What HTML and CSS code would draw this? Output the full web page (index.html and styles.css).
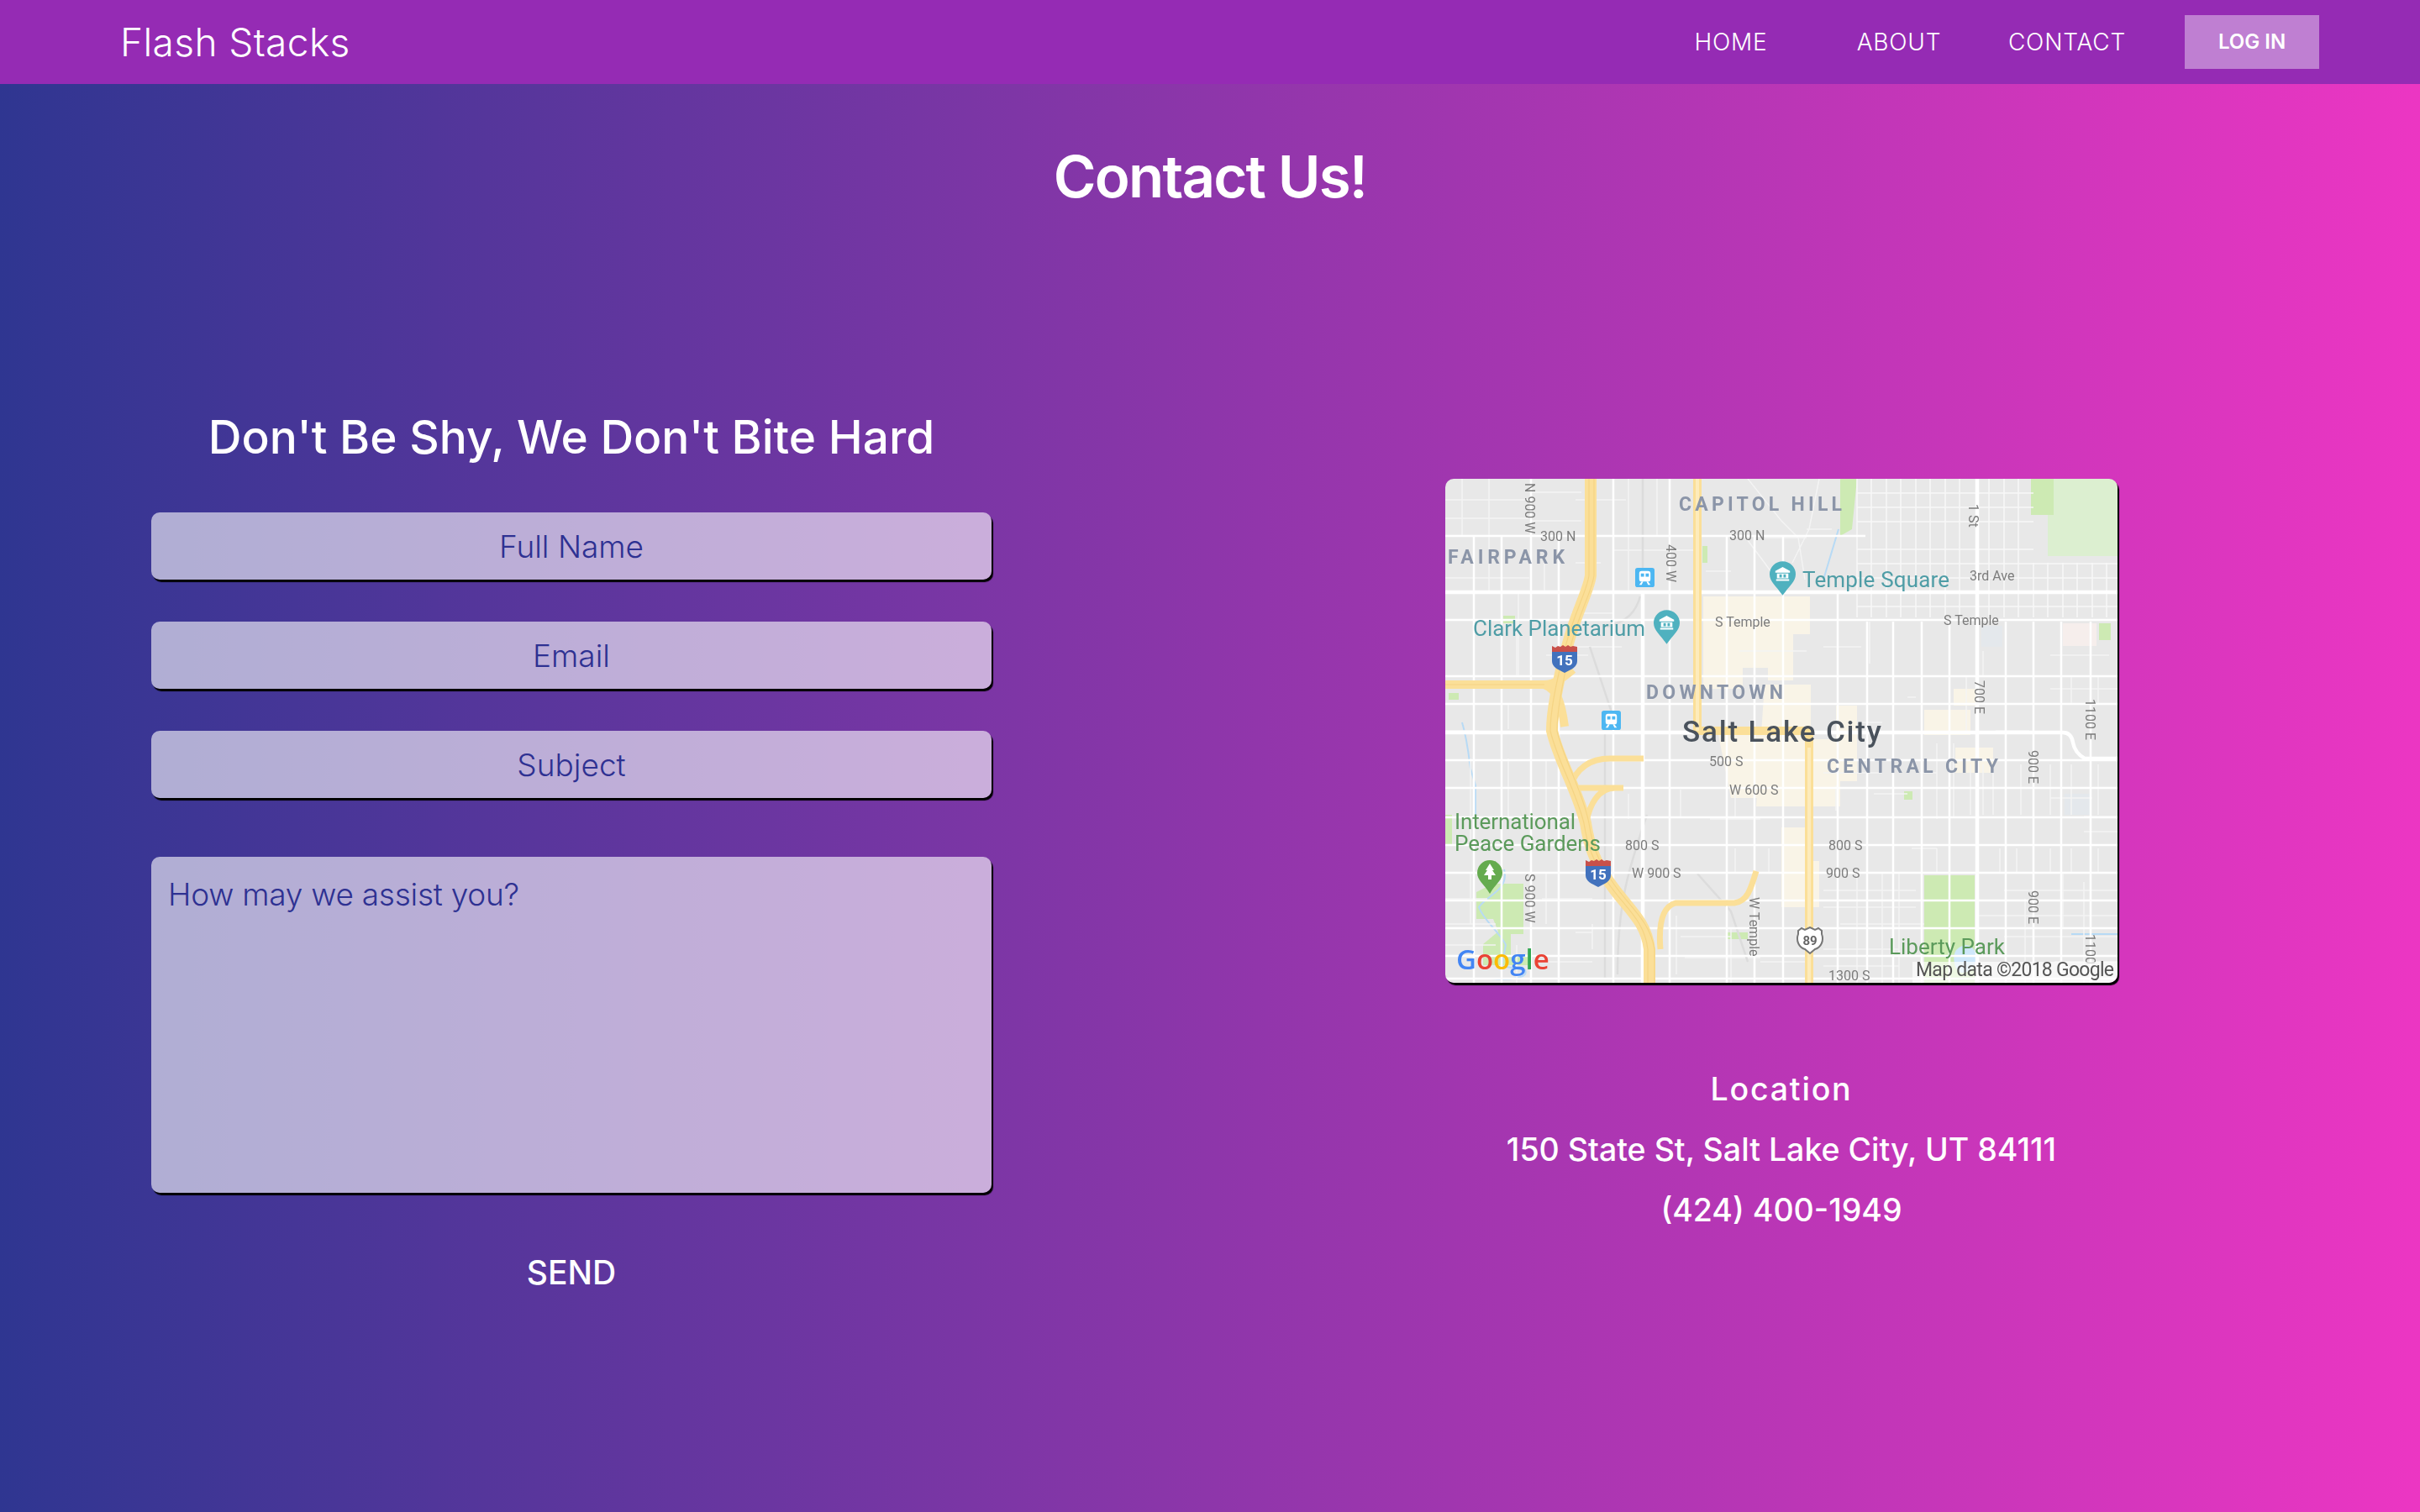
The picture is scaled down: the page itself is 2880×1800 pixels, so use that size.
FILE: index.html
```html
<!DOCTYPE html>
<html lang="en">
<head>
  <meta charset="UTF-8">
  <meta name="viewport" content="width=device-width, initial-scale=1.0">
  <title>Flash Stacks - Contact</title>
  <link rel="stylesheet" href="styles.css">
</head>
<body>
  <nav class="nav">
    <a class="brand" href="#">Flash Stacks</a>
    <div class="nav-links">
      <a class="nav-link" href="#">HOME</a>
      <a class="nav-link" href="#">ABOUT</a>
      <a class="nav-link" href="#">CONTACT</a>
      <a class="login" href="#">LOG IN</a>
    </div>
  </nav>

  <h1 class="title">Contact Us!</h1>

  <main class="columns">
    <form class="contact-form">
      <h2 class="form-title">Don't Be Shy, We Don't Bite Hard</h2>
      <input class="field" type="text" placeholder="Full Name">
      <input class="field" type="text" placeholder="Email">
      <input class="field" type="text" placeholder="Subject">
      <textarea class="field message" placeholder="How may we assist you?"></textarea>
      <button class="send" type="button">SEND</button>
    </form>

    <section class="location">
      <div class="map-frame">
        <svg class="map" viewBox="0 0 800 600" width="800" height="600">
          <defs>
            <symbol id="i15" viewBox="0 0 32 36">
              <path d="M1 2l4 2 3-2 3 1 3-2 3 2 3-2 3 2 3-1 5 1v6H1z" fill="#c8504a"/>
              <path d="M1 9h30v11c0 7-7 10-15 14C8 30 1 27 1 20z" fill="#4272bd"/>
              <text class="shield-text" x="16" y="25">15</text>
            </symbol>
            <symbol id="us89" viewBox="0 0 38 34">
              <path d="M5 5l4-3 4 2 6-3 6 3 4-2 4 3v4c3 8-1 16-8 18l-6 5-6-5C6 25 2 17 5 9z" fill="#fff" stroke="#777" stroke-width="2"/>
              <text class="us-text" x="19" y="22">89</text>
            </symbol>
            <symbol id="transit" viewBox="0 0 24 24">
              <rect width="24" height="24" rx="3" fill="#4db7f2"/>
              <rect x="5" y="4" width="14" height="13" rx="3" fill="#fff"/>
              <rect x="7" y="7" width="4" height="4" fill="#4db7f2"/>
              <rect x="13" y="7" width="4" height="4" fill="#4db7f2"/>
              <path d="M8 17l-3 4h3l2-4zM16 17l3 4h-3l-2-4z" fill="#fff"/>
            </symbol>
            <symbol id="museum" viewBox="0 0 32 42">
              <path d="M16 0a16 16 0 0 1 16 16c0 9-8 14-16 26C8 30 0 25 0 16A16 16 0 0 1 16 0z" fill="#4fb1bf"/>
              <path d="M16 7l9 5v2H7v-2zM8 22h16v2H8zM9 15h14v6H9z" fill="#fff"/>
              <path d="M12 16h3v4h-3zM17 16h3v4h-3z" fill="#4fb1bf"/>
            </symbol>
          </defs>

          <rect width="800" height="600" fill="#e8e8e8"/>

          <!-- land use -->
          <g fill="#f9f4e7">
            <path d="M307 140h127v45h-20v55h-30v-15h-30v25h-47z"/>
            <path d="M380 245h55v65h30v-40h25v90h-20v30h-100z"/>
            <path d="M325 305h110v55h-50v20h-45z"/>
            <path d="M400 415h35v40h10v55h-45z"/>
            <path d="M570 275h55v30h-55zM607 320h45v30h-45zM605 250h30v20h-30z"/>
          </g>
          <g fill="#cdeab3">
            <path d="M717 0h83v92h-83z" fill="#dcefd0"/>
            <path d="M697 0h27v43h-27zM570 472h60v128h-60z"/>
            <path d="M37 492l20-10h36v60H78v25h22v12H45v-25l18-15-6-15H37z"/>
            <path d="M69 163h14v9H69zM0 400h8v36H0zM4 255h12v8H4z"/>
            <path d="M470 0h20l-6 60-14 8zM306 80h6v20h-6zM778 172h14v20h-14zM546 372h10v10h-10zM335 540h25v8h-25z"/>
          </g>
          <path d="M735 172h40v27h-40z" fill="#f6eeec"/>
          <path d="M638 175h25v25h-25zM737 375h30v25h-30z" fill="#e4e8ec"/>

          <!-- water -->
          <g fill="none" stroke="#b7daf5" stroke-width="2">
            <path d="M20 290c6 20 8 40 10 55l6 20v50"/>
            <path d="M70 465c6 25-20 30-30 45 5 15 25 30 32 45l-5 25 28 5c5 10-20 12-40 10"/>
            <path d="M468 60l-12 40-6 20M636 535h85M745 542h55"/>
          </g>
          <path d="M609 560c8-8 20-6 22 6s-4 20-14 22-16-20-8-28z" fill="#cfe7fa"/>

          <!-- minor streets -->
          <g fill="none" stroke="#f4f4f4" stroke-width="1.5">
            <path d="M0 25h100M0 47h100M102 16h60M102 50h60M0 118h100M150 160h50M200 85h100M155 25h60M155 100h30"/>
            <path d="M20 0v68M52 0v135M87 135v100M118 100v35M218 0v135M252 0v68M85 168v68"/>
            <path d="M150 200h60M120 210h50M0 268h70M0 300h40M75 268v30M30 333v110M75 333v70M55 368h35M70 403h50M120 335v100"/>
            <path d="M0 500h50M0 530h60M0 555h60M30 470v60M85 555v45M115 500h60M155 540h20M175 530v30M120 470v60M120 575h55"/>
            <path d="M215 403h60M218 375v30M280 370v32M315 405h60M345 440v30M385 440v28M275 520v70M340 535v65M345 370v32"/>
            <path d="M450 350h70M465 365v30M510 375h40M555 440h30M565 350h20M585 315v90M585 440v30M605 315v87M625 340v60"/>
            <path d="M640 340v60M652 340v60M685 340v60M720 340v60M745 340v60M777 340v60M740 380h30"/>
            <path d="M660 440v30M680 440v30M720 440v30M745 440v30M777 440v30M760 402h40M760 420h40M720 380h20"/>
            <path d="M760 480v120M665 490h135M690 500v100M735 470v65M665 545h135M635 520h165M725 575h75"/>
            <path d="M450 490h110M450 510h110M470 530h100M490 470v130M520 470v130M540 470v130M450 560h90M450 580h90"/>
            <path d="M720 210h70M720 235h40M720 250h80M745 235v33M777 235v33M620 235v67M640 205v30M655 300h40"/>
            <path d="M350 205h80M340 110h-30M450 200h45M505 170v50M550 260h10M490 290h30"/>
            <path d="M350 60l30 40 25 35M360 0l40 50 20 20 8 50M380 70h50M445 0l-12 60-20 40M460 60h-30"/>
            <path d="M372 520v40M375 575h55M280 545h60M285 570h90"/>
          </g>
          <g fill="none" stroke="#dcdcdc" stroke-width="2.5">
            <path d="M235 0v110M232 140c-5 18-15 30-40 36M172 200l30 90M190 300v295M240 400c-20 60-35 100-35 190M300 470l40 45 20 60"/>
          </g>

          <!-- fine grid north east -->
          <g fill="none" stroke="#f8f8f8" stroke-width="1.5">
            <path d="M490 0v165M507 0v165M525 0v165M542 0v165M560 0v165M577 0v165M595 0v165M612 0v165M647 0v165M665 0v165M682 0v165"/>
            <path d="M700 100v65M717 100v65M735 100v65M752 100v65M770 100v65M787 100v65"/>
            <path d="M490 17h210M490 34h210M490 51h210M490 84h210M490 101h310M490 118h310M490 152h310"/>
          </g>

          <!-- main streets -->
          <g fill="none" stroke="#fff" stroke-width="2.5">
            <path d="M0 68h500M0 168h800M0 235h800M0 268h800M0 335h800M0 368h800M0 403h800M0 436h800M0 469h800M0 502h800M0 535h800M0 568h800M0 595h800"/>
            <path d="M34 68v532M67 68v532M102 0v600M135 68v532M200 0v600M267 0v600M335 68v532M368 68v532M402 68v532M467 135v465M502 170v430M533 170v430M567 170v430M600 170v430M667 170v430M700 170v430M733 170v430M768 170v430"/>
          </g>
          <g fill="none" stroke="#fff" stroke-width="4.5">
            <path d="M0 135h800M235 135v465M633 0v600M0 302h735q10 0 12 12t14 19h39"/>
          </g>

          <!-- highways -->
          <g fill="none" stroke="#fbdf98" stroke-linejoin="round">
            <path stroke-width="10" d="M300 0v300h133v300"/>
            <path stroke-width="7" d="M236 333h-40c-25 0-40 12-48 34M212 368h-55M202 368c-20 0-30 20-34 40"/>
            <path stroke-width="10" d="M0 245h118c12 0 22-8 34-18M118 245c15 6 20 20 24 50"/>
            <path stroke-width="7" d="M256 560c-2-25 0-50 18-55h70c16-2 20-18 26-38"/>
            <path stroke-width="14" d="M173 0v115c-2 18-18 45-28 85-8 30-18 70-18 100 8 35 30 70 40 110 4 25 10 45 28 70 20 30 44 45 48 80v40"/>
          </g>
          <g fill="none" stroke="#f5d484" stroke-width="1.2">
            <path d="M171 0v115c-2 18-18 45-28 85-8 30-18 70-18 100 8 35 30 70 40 110 4 25 10 45 28 70 20 30 44 45 48 80v40M177 0v115c-2 18-18 45-28 85-6 30-16 70-16 100 8 35 30 70 38 110 4 25 10 45 28 70 20 30 44 45 50 80v40"/>
            <path d="M0 245h118"/>
          </g>
          <path d="M300 0v300M433 320v280" fill="none" stroke="#fdebbb" stroke-width="4"/>

          <!-- shields and pins -->
          <use href="#i15" x="126" y="197" width="32" height="36"/>
          <use href="#i15" x="166" y="452" width="32" height="36"/>
          <use href="#us89" x="415" y="533" width="38" height="34"/>
          <use href="#transit" x="226" y="106" width="23" height="23"/>
          <use href="#transit" x="186" y="276" width="23" height="23"/>
          <use href="#museum" x="248" y="156" width="31" height="41"/>
          <use href="#museum" x="386" y="98" width="31" height="41"/>
          <path d="M53 454a15 15 0 0 1 15 15c0 9-8 13-15 25-7-12-15-16-15-25a15 15 0 0 1 15-15z" fill="#65ab4f"/>
          <path d="M53 458l5 8h-2l4 6h-5v5h-4v-5h-5l4-6h-2z" fill="#fff"/>

          <!-- district labels -->
          <text class="district" x="278" y="38" textLength="194">CAPITOL HILL</text>
          <text class="district" x="3" y="101" textLength="139">FAIRPARK</text>
          <text class="district" x="239" y="262" textLength="163">DOWNTOWN</text>
          <text class="district" x="454" y="350" textLength="204">CENTRAL CITY</text>
          <text class="city" x="282" y="313" textLength="237">Salt Lake City</text>

          <!-- places -->
          <text class="place teal" x="33" y="187" textLength="205">Clark Planetarium</text>
          <text class="place teal" x="425" y="129" textLength="175">Temple Square</text>
          <text class="place green" x="11" y="417" textLength="144">International</text>
          <text class="place green" x="11" y="443" textLength="174">Peace Gardens</text>
          <text class="place green" x="528" y="566" textLength="138">Liberty Park</text>

          <!-- street names -->
          <text class="street" x="113" y="74">300 N</text>
          <text class="street" x="338" y="73">300 N</text>
          <text class="street" x="321" y="176">S Temple</text>
          <text class="street" x="624" y="121">3rd Ave</text>
          <text class="street" x="593" y="174">S Temple</text>
          <text class="street" x="314" y="342">500 S</text>
          <text class="street" x="338" y="376">W 600 S</text>
          <text class="street" x="214" y="442">800 S</text>
          <text class="street" x="222" y="475">W 900 S</text>
          <text class="street" x="456" y="442">800 S</text>
          <text class="street" x="453" y="475">900 S</text>
          <text class="street" x="456" y="597">1300 S</text>
          <text class="street" transform="translate(95 5) rotate(90)">N 900 W</text>
          <text class="street" transform="translate(263 78) rotate(90)">400 W</text>
          <text class="street" transform="translate(623 30) rotate(90)">1 St</text>
          <text class="street" transform="translate(630 240) rotate(90)">700 E</text>
          <text class="street" transform="translate(762 262) rotate(90)">1100 E</text>
          <text class="street" transform="translate(694 323) rotate(90)">900 E</text>
          <text class="street" transform="translate(694 490) rotate(90)">900 E</text>
          <text class="street" transform="translate(762 542) rotate(90)">1100</text>
          <text class="street" transform="translate(95 470) rotate(90)">S 900 W</text>
          <text class="street" transform="translate(362 498) rotate(90)">W Temple</text>

          <!-- attribution -->
          <text class="google" x="13" y="584"><tspan fill="#4285f4">G</tspan><tspan fill="#ea4335">o</tspan><tspan fill="#fbbc05">o</tspan><tspan fill="#4285f4">g</tspan><tspan fill="#34a853">l</tspan><tspan fill="#ea4335">e</tspan></text>
          <rect x="556" y="575" width="244" height="25" fill="#fff" opacity=".65"/>
          <text class="attribution" x="560" y="592" textLength="236">Map data ©2018 Google</text>
        </svg>
      </div>
      <p class="location-line location-heading">Location</p>
      <p class="location-line">150 State St, Salt Lake City, UT 84111</p>
      <p class="location-line">(424) 400-1949</p>
    </section>
  </main>
</body>
</html>
```

FILE: styles.css
```css
html, body { margin: 0; height: 100%; }
body { min-height: 1800px; background: linear-gradient(to right, #2f3691, #ec36c3); color: #fff; font-family: Inter, "Open Sans", sans-serif; }
a { color: #fff; text-decoration: none; }

.nav { display: flex; align-items: center; justify-content: space-between; height: 100px; padding: 0 120px 0 143px; background: #952bb4; }
.brand { font-size: 46px; font-weight: 300; letter-spacing: .4px; }
.nav-links { display: flex; align-items: center; }
.nav-link { width: 200px; text-align: center; font-size: 28px; font-weight: 300; letter-spacing: .8px; }
.login { width: 160px; margin-left: 40px; line-height: 64px; text-align: center; font-size: 24px; font-weight: 600; background: rgba(255,255,255,.4); }

.title { margin: 60px 0 0; line-height: 100px; text-align: center; font-size: 69px; font-weight: 600; letter-spacing: -1.8px; }

.columns { display: grid; grid-template-columns: 1360px 1520px; margin-top: 200px; }

.contact-form { display: flex; flex-direction: column; align-items: center; }
.form-title { margin: 10px 0 40px; line-height: 100px; font-size: 55px; font-weight: 500; }
.field { box-sizing: border-box; display: block; width: 1000px; height: 80px; margin: 0 0 50px; padding: 0 20px; border: 0; outline: 0; border-radius: 10px; background: rgba(255,255,255,.6); box-shadow: 2px 3px 1px #000; color: #2e3192; font-family: Inter, sans-serif; font-size: 37px; font-weight: 300; text-align: center; }
.field::placeholder { color: #2e3192; opacity: 1; }
.message { height: 400px; margin: 20px 0 0; padding: 22px 20px; letter-spacing: -.25px; text-align: left; resize: none; }
.send { margin-top: 70px; padding: 0; border: 0; background: none; color: #fff; font-family: Inter, sans-serif; font-size: 39px; font-weight: 500; line-height: 50px; }

.location { display: flex; flex-direction: column; align-items: center; padding-top: 110px; }
.map-frame { width: 800px; height: 600px; margin-bottom: 91px; border-radius: 10px; overflow: hidden; box-shadow: 2px 3px 1px #000; }
.map { display: block; filter: blur(.7px); }
.location-line { margin: 0; line-height: 72px; font-size: 37.5px; font-weight: 500; }
.location-heading { letter-spacing: 1.8px; }

.district { font-family: Roboto, sans-serif; font-size: 23px; font-weight: 700; fill: #8b95a8; }
.city { font-family: Roboto, sans-serif; font-size: 35px; font-weight: 500; fill: #4a525c; }
.place { font-family: Roboto, sans-serif; font-size: 26px; }
.teal { fill: #4f9da6; }
.green { fill: #5b9a5b; }
.street { font-family: Roboto, sans-serif; font-size: 16px; fill: #7c7c7c; }
.google { font-family: "Open Sans", sans-serif; font-size: 33px; font-weight: 600; }
.attribution { font-family: Roboto, sans-serif; font-size: 23px; fill: #555; }
.shield-text { font-family: Roboto, sans-serif; font-size: 17px; font-weight: 700; fill: #fff; text-anchor: middle; }
.us-text { font-family: Roboto, sans-serif; font-size: 15px; font-weight: 700; fill: #666; text-anchor: middle; }
```
